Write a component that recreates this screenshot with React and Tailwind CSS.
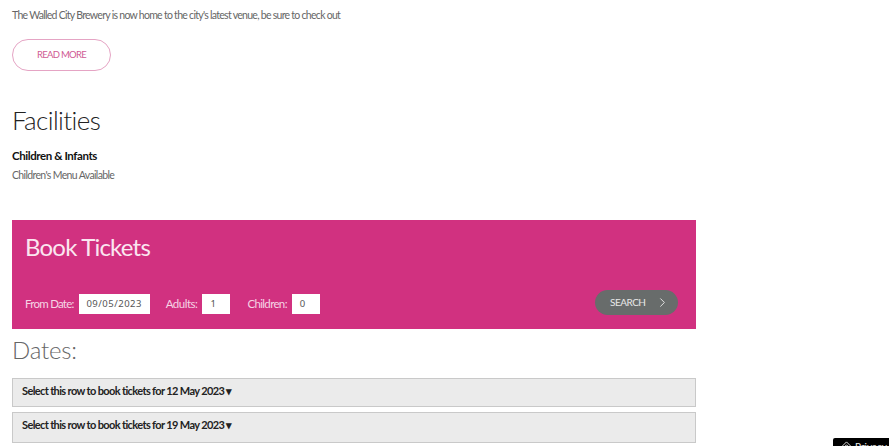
import React from "react";
import { ChevronRight } from "lucide-react";

const font = { fontFamily: 'Lato, "Noto Sans", sans-serif' };

function Field({ label, value, width, center, tracking, className = "" }) {
  return (
    <div className={`flex items-center gap-[5px] ${className}`}>
      <span className={`text-[11.5px] ${tracking} text-[#f6d5e5]`}>{label}</span>
      <div className={`${width} ${center ? "justify-center" : "pl-2"} flex h-5 items-center bg-white text-[9.5px] text-[#555] tracking-[0.5px]`} style={{ fontFamily: '"Noto Sans", sans-serif' }}>{value}</div>
    </div>
  );
}

function Row({ children, h }) {
  return (
    <div className={`${h} flex items-start border border-[#c9c9c9] bg-[#ebebeb] pl-[9px] pt-[4px] text-[11px] font-bold tracking-[-0.63px] text-[#222]`}>
      {children}
    </div>
  );
}

export default function App() {
  return (
    <div className="relative h-[446px] w-[889px] overflow-hidden bg-white" style={font}>
      <div className="w-[696px] pl-3">
        <p className="pt-[7px] text-[10.5px] leading-4 tracking-[-0.72px] text-[#666]">
          The Walled City Brewery is now home to the city's latest venue, be sure to check out
        </p>
        <div className="mt-4 flex h-8 w-[99px] items-center justify-center rounded-full border border-[#e5a4c4] pt-px text-[9.5px] tracking-[-0.7px] text-[#cf5a94]">
          READ MORE
        </div>
        <h2 className="mt-[32px] text-[26px] leading-[34px] font-light tracking-[-0.6px] text-[#222]">Facilities</h2>
        <h3 className="mt-[11px] text-[11.5px] leading-4 font-bold tracking-[-0.42px] text-[#111]">Children &amp; Infants</h3>
        <p className="mt-[4px] text-[10.5px] leading-[14px] tracking-[-0.65px] text-[#666]">Children's Menu Available</p>

        <section className="mt-[38px] h-[109px] bg-[#d13180] pr-3 pl-[13px] pt-[10px]">
          <h2 className="text-[24px] leading-[34px] font-normal tracking-[-0.8px] text-[#fbe6f0]">Book Tickets</h2>
          <div className="mt-[26px] flex items-start justify-between pr-[6px]">
            <div className="mt-[4px] flex items-center">
              <Field label="From Date:" value="09/05/2023" width="w-[71px]" tracking="tracking-[-0.75px]" center />
              <Field label="Adults:" value="1" width="w-7" tracking="tracking-[-0.5px]" className="ml-[16px]" />
              <Field label="Children:" value="0" width="w-7" tracking="tracking-[-0.65px]" className="ml-[17px]" />
            </div>
            <div className="flex h-[25px] w-[83px] items-center rounded-full bg-[#686c6b] pl-[15px] text-[10px] tracking-[-0.5px] text-[#e8e8e8]">
              SEARCH
              <ChevronRight size={15} strokeWidth={1.5} className="ml-[10px]" />
            </div>
          </div>
        </section>

        <h2 className="mt-[5px] text-[24px] leading-8 font-light tracking-[-0.2px] text-[#666]">Dates:</h2>
        <div className="mt-[12px] flex flex-col gap-[5px]">
          <Row h="h-[29px]">Select this row to book tickets for 12 May 2023 ▾</Row>
          <Row h="h-[31px]">Select this row to book tickets for 19 May 2023 ▾</Row>
        </div>
      </div>
      <div className="absolute top-[438px] left-[833px] flex h-4 w-[70px] items-start gap-[3px] rounded-tl-[2px] bg-black pt-[1px] pl-2 text-[10px] leading-[14px] text-[#eee]">
        <svg width="11" height="11" viewBox="0 0 12 12" fill="none" stroke="#eee" strokeWidth="1" className="mt-[2px]">
          <path d="M6 1 L11 6 L6 11 L1 6 Z" />
          <circle cx="6" cy="6" r="1.5" />
        </svg>
        Privacy
      </div>
    </div>
  );
}
